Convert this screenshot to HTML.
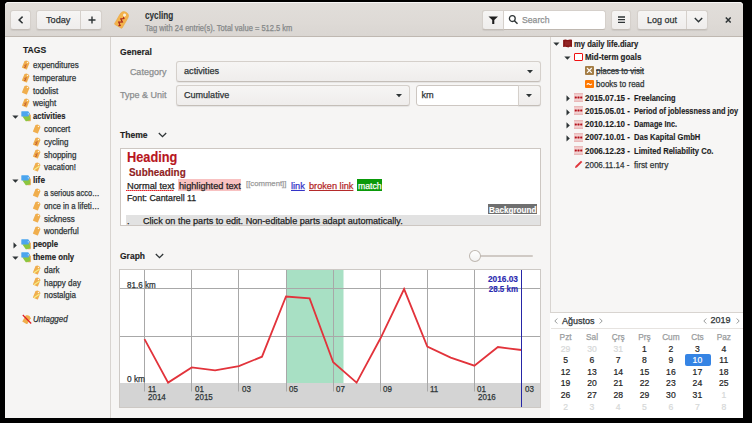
<!DOCTYPE html><html><head><meta charset="utf-8"><style>
html,body{margin:0;padding:0;width:752px;height:423px;overflow:hidden;background:#000;}
body{position:relative;font-family:"Liberation Sans",sans-serif;}
.r,.t{position:absolute;}
.t{white-space:nowrap;-webkit-text-stroke:0.25px currentColor;}
</style></head><body>
<div class="r" style="left:5px;top:2px;width:738px;height:416px;background:#f6f5f4;border-radius:4px 4px 0 0;"></div>
<div class="r" style="left:5px;top:2px;width:738px;height:34px;background:linear-gradient(#e1deda,#dedad6 60%,#dad6d2);border-radius:4px 4px 0 0;box-shadow:inset 0 1px rgba(255,255,255,0.7);"></div>
<div class="r" style="left:5px;top:36px;width:738px;height:1px;background:#bfb8b1;"></div>
<div class="r" style="left:10px;top:10px;width:21px;height:19.6px;background:linear-gradient(#f6f5f4,#efedec);border:1px solid #d5d0cb;border-bottom-color:#c4beb8;border-radius:3px;box-sizing:border-box;box-shadow:0 1px 1px rgba(0,0,0,0.07);"></div>
<svg class="r" style="left:17.1px;top:14.6px" width="8" height="10" viewBox="0 0 8 10"><path d="M5.6 1.6 L2.1 4.9 L5.6 8.2" fill="none" stroke="#2e3436" stroke-width="1.5"/></svg>
<div class="r" style="left:36px;top:10px;width:66px;height:19.6px;background:linear-gradient(#f6f5f4,#efedec);border:1px solid #d5d0cb;border-bottom-color:#c4beb8;border-radius:3px;box-sizing:border-box;box-shadow:0 1px 1px rgba(0,0,0,0.07);"></div>
<div class="r" style="left:80px;top:11px;width:1px;height:18px;background:#d5d0cb;"></div>
<div class="t" style="left:46px;top:14px;font-size:9.9px;line-height:11px;color:#2e3436;transform:scaleX(0.9260);transform-origin:0 0;">Today</div>
<svg class="r" style="left:87.5px;top:15.5px" width="8" height="8" viewBox="0 0 8 8"><path d="M4 0.5 V7.5 M0.5 4 H7.5" fill="none" stroke="#2e3436" stroke-width="1.4"/></svg>
<svg class="r" style="left:111px;top:8px" width="22" height="23" viewBox="0 0 22 23"><g transform="rotate(30 11 11.5)"><path d="M6.6 7.8 Q6.6 3.2 11 3.2 Q15.4 3.2 15.4 7.8 L15.4 18.6 Q15.4 19.4 14.6 19.4 L7.4 19.4 Q6.6 19.4 6.6 18.6 Z" fill="#f3b34c" stroke="#eaa53c" stroke-width="0.5"/><circle cx="11" cy="6.4" r="1.5" fill="#f9f1e0"/><path d="M11 8.6 L12.2 9.6 L9.6 11.6 L12.6 13.4 L9.4 15.4 L12.4 17.6 L11 18.6" fill="none" stroke="#a8261c" stroke-width="1.1"/></g></svg>
<div class="t" style="left:145.3px;top:10px;font-size:10.37px;line-height:11px;color:#2e3436;font-weight:700;-webkit-text-stroke:0.15px currentColor;transform:scaleX(0.7900);transform-origin:0 0;">cycling</div>
<div class="t" style="left:145.3px;top:23px;font-size:8.36px;line-height:10px;color:#858889;transform:scaleX(0.9023);transform-origin:0 0;">Tag with 24 entrie(s). Total value = 512.5 km</div>
<div class="r" style="left:482px;top:10px;width:123.5px;height:19.6px;border:1px solid #d5d0cb;border-bottom-color:#bfb8b1;border-radius:3px;box-sizing:border-box;background:#fff;"></div>
<div class="r" style="left:482px;top:10px;width:22px;height:19.6px;background:linear-gradient(#f6f5f4,#efedec);border:1px solid #d5d0cb;border-bottom-color:#c4beb8;border-radius:3px;box-sizing:border-box;box-shadow:0 1px 1px rgba(0,0,0,0.07);border-radius:3px 0 0 3px;"></div>
<svg class="r" style="left:487.5px;top:15.5px" width="11" height="8.5" viewBox="0 0 11 8.5"><path d="M0.5 0.5 H10 L6.3 4 V8 L4.2 8 V4 Z" fill="#1e1e1e"/></svg>
<svg class="r" style="left:508px;top:14px" width="11" height="11" viewBox="0 0 11 11"><circle cx="4.3" cy="4.6" r="2.9" fill="none" stroke="#2e3436" stroke-width="1.3"/><path d="M6.4 6.7 L9.5 9.8" stroke="#2e3436" stroke-width="1.4"/></svg>
<div class="t" style="left:522.3px;top:14px;font-size:9.9px;line-height:11px;color:#8b8e8f;transform:scaleX(0.8789);transform-origin:0 0;">Search</div>
<div class="r" style="left:611px;top:10px;width:20px;height:19.6px;background:linear-gradient(#f6f5f4,#efedec);border:1px solid #d5d0cb;border-bottom-color:#c4beb8;border-radius:3px;box-sizing:border-box;box-shadow:0 1px 1px rgba(0,0,0,0.07);"></div>
<svg class="r" style="left:617.5px;top:16px" width="7" height="7.5" viewBox="0 0 7 7.5"><path d="M0 1 H7 M0 3.7 H7 M0 6.4 H7" stroke="#2e3436" stroke-width="1.3"/></svg>
<div class="r" style="left:636.5px;top:10px;width:71.10000000000002px;height:19.6px;background:linear-gradient(#f6f5f4,#efedec);border:1px solid #d5d0cb;border-bottom-color:#c4beb8;border-radius:3px;box-sizing:border-box;box-shadow:0 1px 1px rgba(0,0,0,0.07);"></div>
<div class="r" style="left:686px;top:11px;width:1px;height:18px;background:#d5d0cb;"></div>
<div class="t" style="left:646.5px;top:14px;font-size:9.9px;line-height:11px;color:#2e3436;transform:scaleX(0.9075);transform-origin:0 0;">Log out</div>
<svg class="r" style="left:693.5px;top:16.5px" width="9" height="6" viewBox="0 0 9 6"><path d="M0.8 1 L4.5 4.7 L8.2 1" fill="none" stroke="#2e3436" stroke-width="1.4"/></svg>
<svg class="r" style="left:724.5px;top:16.8px" width="6.5" height="6" viewBox="0 0 6.5 6"><path d="M0.8 0.5 L5.7 5.5 M5.7 0.5 L0.8 5.5" stroke="#2e3436" stroke-width="1.5"/></svg>
<div class="r" style="left:110px;top:37px;width:1px;height:381px;background:#d8d4d0;"></div>
<div class="r" style="left:550px;top:37px;width:1px;height:381px;background:#d8d4d0;"></div>
<div class="t" style="left:22.9px;top:44px;font-size:9.72px;line-height:11px;color:#1e1e1e;font-weight:700;-webkit-text-stroke:0.15px currentColor;transform:scaleX(0.8829);transform-origin:0 0;">TAGS</div>
<svg class="r" style="left:21.4px;top:58.7px" width="10" height="11" viewBox="0 0 10 11"><g transform="rotate(22 5 5.5)"><path d="M2.3 2.8 Q5 0 7.7 2.8 L7.7 9.6 Q7.7 10 7.3 10 L2.7 10 Q2.3 10 2.3 9.6 Z" fill="#f0ae4d"/><path d="M4.2 9 L5.8 7.8 L4.2 6.6 L5.9 5.4" fill="none" stroke="#c5602f" stroke-width="0.9"/><circle cx="5.6" cy="3" r="0.75" fill="#fdf6e8"/></g></svg>
<div class="t" style="left:32.8px;top:60px;font-size:8.8px;line-height:10px;color:#2e3436;transform:scaleX(0.9094);transform-origin:0 0;">expenditures</div>
<svg class="r" style="left:21.4px;top:71.5px" width="10" height="11" viewBox="0 0 10 11"><g transform="rotate(22 5 5.5)"><path d="M2.3 2.8 Q5 0 7.7 2.8 L7.7 9.6 Q7.7 10 7.3 10 L2.7 10 Q2.3 10 2.3 9.6 Z" fill="#f0ae4d"/><path d="M4.2 9 L5.8 7.8 L4.2 6.6 L5.9 5.4" fill="none" stroke="#c5602f" stroke-width="0.9"/><circle cx="5.6" cy="3" r="0.75" fill="#fdf6e8"/></g></svg>
<div class="t" style="left:32.8px;top:73px;font-size:8.8px;line-height:10px;color:#2e3436;transform:scaleX(0.9094);transform-origin:0 0;">temperature</div>
<svg class="r" style="left:21.4px;top:84.3px" width="10" height="11" viewBox="0 0 10 11"><g transform="rotate(22 5 5.5)"><path d="M2.3 2.8 Q5 0 7.7 2.8 L7.7 9.6 Q7.7 10 7.3 10 L2.7 10 Q2.3 10 2.3 9.6 Z" fill="#f0ae4d"/><circle cx="5.6" cy="3" r="0.75" fill="#fdf6e8"/></g></svg>
<div class="t" style="left:32.8px;top:86px;font-size:8.8px;line-height:10px;color:#2e3436;transform:scaleX(0.9094);transform-origin:0 0;">todolist</div>
<svg class="r" style="left:21.4px;top:97.10000000000001px" width="10" height="11" viewBox="0 0 10 11"><g transform="rotate(22 5 5.5)"><path d="M2.3 2.8 Q5 0 7.7 2.8 L7.7 9.6 Q7.7 10 7.3 10 L2.7 10 Q2.3 10 2.3 9.6 Z" fill="#f0ae4d"/><path d="M4.2 9 L5.8 7.8 L4.2 6.6 L5.9 5.4" fill="none" stroke="#c5602f" stroke-width="0.9"/><circle cx="5.6" cy="3" r="0.75" fill="#fdf6e8"/></g></svg>
<div class="t" style="left:32.8px;top:98px;font-size:8.8px;line-height:10px;color:#2e3436;transform:scaleX(0.9094);transform-origin:0 0;">weight</div>
<svg class="r" style="left:21.0px;top:111.3px" width="11" height="11" viewBox="0 0 11 11"><path d="M7.2 1.8 L9.9 4 L9.9 9.6 Q9.9 10.3 9.2 10.3 L6.4 10.3 Z" fill="#eda85a"/><path d="M1.3 5.3 L8.6 4.6 L9.3 8.2 Q9.4 8.8 8.8 9.2 L5.6 10.2 Q5 10.4 4.6 9.9 Z" fill="#8cc63f"/><path d="M0.3 0.8 Q0.3 0.3 0.8 0.3 H7.2 L9 2.85 L7.2 5.4 H0.8 Q0.3 5.4 0.3 4.9 Z" fill="#4ba5ee"/><circle cx="7.3" cy="2.85" r="0.6" fill="#e8f4fd"/></svg>
<svg class="r" style="left:12.3px;top:115.0px" width="7" height="5" viewBox="0 0 7 5"><path d="M0.3 0.5 H6.5 L3.4 3.8 Z" fill="#2e3436"/></svg>
<div class="t" style="left:32.6px;top:111px;font-size:8.8px;line-height:10px;color:#1e1e1e;font-weight:700;-webkit-text-stroke:0.15px currentColor;transform:scaleX(0.8631);transform-origin:0 0;">activities</div>
<svg class="r" style="left:32.1px;top:122.7px" width="10" height="11" viewBox="0 0 10 11"><g transform="rotate(22 5 5.5)"><path d="M2.3 2.8 Q5 0 7.7 2.8 L7.7 9.6 Q7.7 10 7.3 10 L2.7 10 Q2.3 10 2.3 9.6 Z" fill="#f0ae4d"/><circle cx="5.6" cy="3" r="0.75" fill="#fdf6e8"/></g></svg>
<div class="t" style="left:43.5px;top:124px;font-size:8.8px;line-height:10px;color:#2e3436;transform:scaleX(0.9094);transform-origin:0 0;">concert</div>
<svg class="r" style="left:32.1px;top:135.5px" width="10" height="11" viewBox="0 0 10 11"><g transform="rotate(22 5 5.5)"><path d="M2.3 2.8 Q5 0 7.7 2.8 L7.7 9.6 Q7.7 10 7.3 10 L2.7 10 Q2.3 10 2.3 9.6 Z" fill="#f0ae4d"/><path d="M4.2 9 L5.8 7.8 L4.2 6.6 L5.9 5.4" fill="none" stroke="#c5602f" stroke-width="0.9"/><circle cx="5.6" cy="3" r="0.75" fill="#fdf6e8"/></g></svg>
<div class="t" style="left:43.5px;top:137px;font-size:8.8px;line-height:10px;color:#2e3436;transform:scaleX(0.9094);transform-origin:0 0;">cycling</div>
<svg class="r" style="left:32.1px;top:148.3px" width="10" height="11" viewBox="0 0 10 11"><g transform="rotate(22 5 5.5)"><path d="M2.3 2.8 Q5 0 7.7 2.8 L7.7 9.6 Q7.7 10 7.3 10 L2.7 10 Q2.3 10 2.3 9.6 Z" fill="#f0ae4d"/><path d="M4.2 9 L5.8 7.8 L4.2 6.6 L5.9 5.4" fill="none" stroke="#c5602f" stroke-width="0.9"/><circle cx="5.6" cy="3" r="0.75" fill="#fdf6e8"/></g></svg>
<div class="t" style="left:43.5px;top:150px;font-size:8.8px;line-height:10px;color:#2e3436;transform:scaleX(0.9094);transform-origin:0 0;">shopping</div>
<svg class="r" style="left:32.1px;top:161.1px" width="10" height="11" viewBox="0 0 10 11"><g transform="rotate(22 5 5.5)"><path d="M2.3 2.8 Q5 0 7.7 2.8 L7.7 9.6 Q7.7 10 7.3 10 L2.7 10 Q2.3 10 2.3 9.6 Z" fill="#f0ae4d"/><path d="M3.4 9.6 L7.2 4" stroke="#f4f08a" stroke-width="1.1"/><circle cx="5.6" cy="3" r="0.75" fill="#fdf6e8"/></g></svg>
<div class="t" style="left:43.5px;top:162px;font-size:8.8px;line-height:10px;color:#2e3436;transform:scaleX(0.9094);transform-origin:0 0;">vacation!</div>
<svg class="r" style="left:21.0px;top:175.29999999999998px" width="11" height="11" viewBox="0 0 11 11"><path d="M7.2 1.8 L9.9 4 L9.9 9.6 Q9.9 10.3 9.2 10.3 L6.4 10.3 Z" fill="#eda85a"/><path d="M1.3 5.3 L8.6 4.6 L9.3 8.2 Q9.4 8.8 8.8 9.2 L5.6 10.2 Q5 10.4 4.6 9.9 Z" fill="#8cc63f"/><path d="M0.3 0.8 Q0.3 0.3 0.8 0.3 H7.2 L9 2.85 L7.2 5.4 H0.8 Q0.3 5.4 0.3 4.9 Z" fill="#4ba5ee"/><circle cx="7.3" cy="2.85" r="0.6" fill="#e8f4fd"/></svg>
<svg class="r" style="left:12.3px;top:179.0px" width="7" height="5" viewBox="0 0 7 5"><path d="M0.3 0.5 H6.5 L3.4 3.8 Z" fill="#2e3436"/></svg>
<div class="t" style="left:32.6px;top:175px;font-size:8.8px;line-height:10px;color:#1e1e1e;font-weight:700;-webkit-text-stroke:0.15px currentColor;transform:scaleX(0.9441);transform-origin:0 0;">life</div>
<svg class="r" style="left:32.1px;top:186.7px" width="10" height="11" viewBox="0 0 10 11"><g transform="rotate(22 5 5.5)"><path d="M2.3 2.8 Q5 0 7.7 2.8 L7.7 9.6 Q7.7 10 7.3 10 L2.7 10 Q2.3 10 2.3 9.6 Z" fill="#f0ae4d"/><circle cx="5.6" cy="3" r="0.75" fill="#fdf6e8"/></g></svg>
<div class="t" style="left:43.5px;top:188px;font-size:8.8px;line-height:10px;color:#2e3436;transform:scaleX(0.8471);transform-origin:0 0;">a serious acco…</div>
<svg class="r" style="left:32.1px;top:199.5px" width="10" height="11" viewBox="0 0 10 11"><g transform="rotate(22 5 5.5)"><path d="M2.3 2.8 Q5 0 7.7 2.8 L7.7 9.6 Q7.7 10 7.3 10 L2.7 10 Q2.3 10 2.3 9.6 Z" fill="#f0ae4d"/><circle cx="5.6" cy="3" r="0.75" fill="#fdf6e8"/></g></svg>
<div class="t" style="left:43.5px;top:201px;font-size:8.8px;line-height:10px;color:#2e3436;transform:scaleX(0.8868);transform-origin:0 0;">once in a lifeti…</div>
<svg class="r" style="left:32.1px;top:212.3px" width="10" height="11" viewBox="0 0 10 11"><g transform="rotate(22 5 5.5)"><path d="M2.3 2.8 Q5 0 7.7 2.8 L7.7 9.6 Q7.7 10 7.3 10 L2.7 10 Q2.3 10 2.3 9.6 Z" fill="#f0ae4d"/><circle cx="5.6" cy="3" r="0.75" fill="#fdf6e8"/></g></svg>
<div class="t" style="left:43.5px;top:214px;font-size:8.8px;line-height:10px;color:#2e3436;transform:scaleX(0.9094);transform-origin:0 0;">sickness</div>
<svg class="r" style="left:32.1px;top:225.1px" width="10" height="11" viewBox="0 0 10 11"><g transform="rotate(22 5 5.5)"><path d="M2.3 2.8 Q5 0 7.7 2.8 L7.7 9.6 Q7.7 10 7.3 10 L2.7 10 Q2.3 10 2.3 9.6 Z" fill="#f0ae4d"/><circle cx="5.6" cy="3" r="0.75" fill="#fdf6e8"/></g></svg>
<div class="t" style="left:43.5px;top:226px;font-size:8.8px;line-height:10px;color:#2e3436;transform:scaleX(0.9094);transform-origin:0 0;">wonderful</div>
<svg class="r" style="left:21.0px;top:239.3px" width="11" height="11" viewBox="0 0 11 11"><path d="M7.2 1.8 L9.9 4 L9.9 9.6 Q9.9 10.3 9.2 10.3 L6.4 10.3 Z" fill="#eda85a"/><path d="M1.3 5.3 L8.6 4.6 L9.3 8.2 Q9.4 8.8 8.8 9.2 L5.6 10.2 Q5 10.4 4.6 9.9 Z" fill="#8cc63f"/><path d="M0.3 0.8 Q0.3 0.3 0.8 0.3 H7.2 L9 2.85 L7.2 5.4 H0.8 Q0.3 5.4 0.3 4.9 Z" fill="#4ba5ee"/><circle cx="7.3" cy="2.85" r="0.6" fill="#e8f4fd"/></svg>
<svg class="r" style="left:13.3px;top:241.50000000000003px" width="5" height="7" viewBox="0 0 5 7"><path d="M0.5 0.3 V6.5 L3.8 3.4 Z" fill="#2e3436"/></svg>
<div class="t" style="left:32.6px;top:239px;font-size:8.8px;line-height:10px;color:#1e1e1e;font-weight:700;-webkit-text-stroke:0.15px currentColor;transform:scaleX(0.8854);transform-origin:0 0;">people</div>
<svg class="r" style="left:21.0px;top:252.1px" width="11" height="11" viewBox="0 0 11 11"><path d="M7.2 1.8 L9.9 4 L9.9 9.6 Q9.9 10.3 9.2 10.3 L6.4 10.3 Z" fill="#eda85a"/><path d="M1.3 5.3 L8.6 4.6 L9.3 8.2 Q9.4 8.8 8.8 9.2 L5.6 10.2 Q5 10.4 4.6 9.9 Z" fill="#8cc63f"/><path d="M0.3 0.8 Q0.3 0.3 0.8 0.3 H7.2 L9 2.85 L7.2 5.4 H0.8 Q0.3 5.4 0.3 4.9 Z" fill="#4ba5ee"/><circle cx="7.3" cy="2.85" r="0.6" fill="#e8f4fd"/></svg>
<svg class="r" style="left:12.3px;top:255.8px" width="7" height="5" viewBox="0 0 7 5"><path d="M0.3 0.5 H6.5 L3.4 3.8 Z" fill="#2e3436"/></svg>
<div class="t" style="left:32.6px;top:252px;font-size:8.8px;line-height:10px;color:#1e1e1e;font-weight:700;-webkit-text-stroke:0.15px currentColor;transform:scaleX(0.8872);transform-origin:0 0;">theme only</div>
<svg class="r" style="left:32.1px;top:263.5px" width="10" height="11" viewBox="0 0 10 11"><g transform="rotate(22 5 5.5)"><path d="M2.3 2.8 Q5 0 7.7 2.8 L7.7 9.6 Q7.7 10 7.3 10 L2.7 10 Q2.3 10 2.3 9.6 Z" fill="#f0ae4d"/><path d="M3.4 9.6 L7.2 4" stroke="#f4f08a" stroke-width="1.1"/><circle cx="5.6" cy="3" r="0.75" fill="#fdf6e8"/></g></svg>
<div class="t" style="left:43.5px;top:265px;font-size:8.8px;line-height:10px;color:#2e3436;transform:scaleX(0.9094);transform-origin:0 0;">dark</div>
<svg class="r" style="left:32.1px;top:276.3px" width="10" height="11" viewBox="0 0 10 11"><g transform="rotate(22 5 5.5)"><path d="M2.3 2.8 Q5 0 7.7 2.8 L7.7 9.6 Q7.7 10 7.3 10 L2.7 10 Q2.3 10 2.3 9.6 Z" fill="#f0ae4d"/><path d="M3.4 9.6 L7.2 4" stroke="#f4f08a" stroke-width="1.1"/><circle cx="5.6" cy="3" r="0.75" fill="#fdf6e8"/></g></svg>
<div class="t" style="left:43.5px;top:278px;font-size:8.8px;line-height:10px;color:#2e3436;transform:scaleX(0.9094);transform-origin:0 0;">happy day</div>
<svg class="r" style="left:32.1px;top:289.09999999999997px" width="10" height="11" viewBox="0 0 10 11"><g transform="rotate(22 5 5.5)"><path d="M2.3 2.8 Q5 0 7.7 2.8 L7.7 9.6 Q7.7 10 7.3 10 L2.7 10 Q2.3 10 2.3 9.6 Z" fill="#f0ae4d"/><path d="M3.4 9.6 L7.2 4" stroke="#f4f08a" stroke-width="1.1"/><circle cx="5.6" cy="3" r="0.75" fill="#fdf6e8"/></g></svg>
<div class="t" style="left:43.5px;top:290px;font-size:8.8px;line-height:10px;color:#2e3436;transform:scaleX(0.9094);transform-origin:0 0;">nostalgia</div>
<svg class="r" style="left:21.5px;top:313.8px" width="10" height="10" viewBox="0 0 10 10"><g transform="rotate(30 5 5)"><path d="M2.2 2.4 Q5 -0.4 7.8 2.4 L7.8 9.6 L2.2 9.6 Z" fill="#f0ae4d"/></g><path d="M0.8 1 L9.2 9.5" stroke="#e01b24" stroke-width="1.2"/></svg>
<div class="t" style="left:33px;top:314px;font-size:8.8px;line-height:10px;color:#2e3436;font-style:italic;transform:scaleX(0.9094);transform-origin:0 0;">Untagged</div>
<div class="t" style="left:119.8px;top:47px;font-size:9.13px;line-height:10px;color:#1e1e1e;font-weight:700;-webkit-text-stroke:0.15px currentColor;transform:scaleX(0.9387);transform-origin:0 0;">General</div>
<div class="t" style="left:-33.599999999999994px;width:200px;text-align:right;top:67px;font-size:9px;line-height:10px;color:#8b8e8f;">Category</div>
<div class="t" style="left:-33.599999999999994px;width:200px;text-align:right;top:90px;font-size:9px;line-height:10px;color:#8b8e8f;">Type &amp; Unit</div>
<div class="r" style="left:176px;top:61px;width:365px;height:21px;background:linear-gradient(#f6f5f4,#efedec);border:1px solid #d5d0cb;border-bottom-color:#c4beb8;border-radius:3px;box-sizing:border-box;box-shadow:0 1px 1px rgba(0,0,0,0.07);"></div>
<div class="t" style="left:183.6px;top:66px;font-size:9.2px;line-height:10px;color:#2e3436;transform:scaleX(0.9963);transform-origin:0 0;">activities</div>
<svg class="r" style="left:526.5px;top:69.8px" width="6" height="4" viewBox="0 0 6 4"><path d="M0 0 H6 L3 3.2 Z" fill="#2e3436"/></svg>
<div class="r" style="left:176px;top:85px;width:234px;height:21px;background:linear-gradient(#f6f5f4,#efedec);border:1px solid #d5d0cb;border-bottom-color:#c4beb8;border-radius:3px;box-sizing:border-box;box-shadow:0 1px 1px rgba(0,0,0,0.07);"></div>
<div class="t" style="left:183.6px;top:90px;font-size:9.2px;line-height:10px;color:#2e3436;transform:scaleX(0.9836);transform-origin:0 0;">Cumulative</div>
<svg class="r" style="left:395.8px;top:93.5px" width="6" height="4" viewBox="0 0 6 4"><path d="M0 0 H6 L3 3.2 Z" fill="#2e3436"/></svg>
<div class="r" style="left:416px;top:85px;width:125px;height:21px;background:#fff;border:1px solid #cdc7c2;border-radius:3px;box-sizing:border-box;"></div>
<div class="r" style="left:518px;top:85px;width:23px;height:21px;background:linear-gradient(#f6f5f4,#efedec);border:1px solid #d5d0cb;border-bottom-color:#c4beb8;border-radius:3px;box-sizing:border-box;box-shadow:0 1px 1px rgba(0,0,0,0.07);border-radius:0 3px 3px 0;"></div>
<div class="t" style="left:421.5px;top:90px;font-size:9.2px;line-height:10px;color:#2e3436;">km</div>
<svg class="r" style="left:526.3px;top:93.5px" width="6" height="4" viewBox="0 0 6 4"><path d="M0 0 H6 L3 3.2 Z" fill="#2e3436"/></svg>
<div class="t" style="left:120px;top:130px;font-size:8.8px;line-height:10px;color:#1e1e1e;font-weight:700;-webkit-text-stroke:0.15px currentColor;transform:scaleX(0.9734);transform-origin:0 0;">Theme</div>
<svg class="r" style="left:157.5px;top:132px" width="9" height="6" viewBox="0 0 9 6"><path d="M0.8 1 L4.5 4.7 L8.2 1" fill="none" stroke="#2e3436" stroke-width="1.3"/></svg>
<div class="r" style="left:119.5px;top:148.2px;width:421.1px;height:78.10000000000002px;background:#fff;border:1px solid #cdc7c2;box-sizing:border-box;"></div>
<div class="t" style="left:127.1px;top:149px;font-size:14.04px;line-height:16px;color:#b8161e;font-weight:700;-webkit-text-stroke:0.15px currentColor;transform:scaleX(0.9087);transform-origin:0 0;">Heading</div>
<div class="t" style="left:128.8px;top:167px;font-size:10px;line-height:11px;color:#902222;font-weight:700;-webkit-text-stroke:0.15px currentColor;transform:scaleX(0.9909);transform-origin:0 0;">Subheading</div>
<div class="t" style="left:126.6px;top:181px;font-size:9.3px;line-height:10px;color:#1e1e1e;transform:scaleX(0.9973);transform-origin:0 0;">Normal text</div>
<div class="r" style="left:126.2px;top:189.9px;width:48.3px;height:1.0px;background:repeating-linear-gradient(90deg,#e5262e 0,#e5262e 1.5px,#f07a7e 1.5px,#f07a7e 2px);"></div>
<div class="r" style="left:178px;top:178.8px;width:63.30000000000001px;height:12.0px;background:#f8c1c1;"></div>
<div class="t" style="left:179.3px;top:181px;font-size:9.3px;line-height:10px;color:#1e1e1e;transform:scaleX(0.9866);transform-origin:0 0;">highlighted text</div>
<div class="t" style="left:245.8px;top:179px;font-size:7.6px;line-height:9px;color:#9a9a9a;transform:scaleX(1.0185);transform-origin:0 0;">[[comment]]</div>
<div class="t" style="left:290.9px;top:181px;font-size:9.2px;line-height:10px;color:#3434c8;transform:scaleX(1.0010);transform-origin:0 0;text-decoration:underline;">link</div>
<div class="t" style="left:308.7px;top:181px;font-size:9.2px;line-height:10px;color:#b52a2a;transform:scaleX(0.9993);transform-origin:0 0;text-decoration:underline;">broken link</div>
<div class="r" style="left:357.1px;top:178.8px;width:25.0px;height:12.699999999999989px;background:#0a9a0a;"></div>
<div class="t" style="left:358.2px;top:181px;font-size:9.2px;line-height:10px;color:#ffffff;transform:scaleX(0.9393);transform-origin:0 0;">match</div>
<div class="t" style="left:126.6px;top:193px;font-size:9px;line-height:10px;color:#1e1e1e;transform:scaleX(0.9764);transform-origin:0 0;">Font: Cantarell 11</div>
<div class="r" style="left:488.3px;top:203.7px;width:48.99999999999994px;height:10.700000000000017px;background:#6f6f6f;"></div>
<div class="t" style="left:489px;top:205px;font-size:8.3px;line-height:10px;color:#ffffff;font-weight:700;-webkit-text-stroke:0.15px currentColor;transform:scaleX(0.9813);transform-origin:0 0;">Background</div>
<div class="r" style="left:126px;top:215.4px;width:413.6px;height:10.099999999999994px;background:#e2e2e2;"></div>
<div class="t" style="left:127px;top:216px;font-size:9.1px;line-height:10px;color:#1e1e1e;">.</div>
<div class="t" style="left:142.5px;top:216px;font-size:9.2px;line-height:10px;color:#1e1e1e;transform:scaleX(0.9900);transform-origin:0 0;">Click on the parts to edit. Non-editable parts adapt automatically.</div>
<div class="t" style="left:119.9px;top:251px;font-size:9px;line-height:10px;color:#1e1e1e;font-weight:700;-webkit-text-stroke:0.15px currentColor;transform:scaleX(0.9433);transform-origin:0 0;">Graph</div>
<svg class="r" style="left:155.3px;top:253.2px" width="9" height="6" viewBox="0 0 9 6"><path d="M0.8 1 L4.5 4.7 L8.2 1" fill="none" stroke="#2e3436" stroke-width="1.3"/></svg>
<div class="r" style="left:474px;top:255px;width:59px;height:1.8000000000000114px;background:#d0cac5;border-radius:1px;"></div>
<div class="r" style="left:468.6px;top:249.6px;width:12.399999999999977px;height:12.599999999999994px;background:linear-gradient(#fff,#f3f2f1);border:1px solid #bfb8b1;border-radius:50%;box-sizing:border-box;"></div>
<svg class="r" style="left:119px;top:269px" width="422" height="139"><rect x="0" y="0" width="422" height="139" fill="#fff"/><rect x="167" y="1" width="57.5" height="113" fill="#a8e0c4"/><rect x="1" y="114" width="420" height="24" fill="#d4d4d4"/><path d="M1 19.5 H421" stroke="#a8a8a8" stroke-width="1"/><path d="M1 67.5 H421" stroke="#a8a8a8" stroke-width="1"/><path d="M25.5 1 V122.5" stroke="#a8a8a8" stroke-width="1"/><path d="M72.5 1 V122.5" stroke="#a8a8a8" stroke-width="1"/><path d="M119.5 1 V122.5" stroke="#a8a8a8" stroke-width="1"/><path d="M167.5 1 V122.5" stroke="#a8a8a8" stroke-width="1"/><path d="M214.5 1 V122.5" stroke="#a8a8a8" stroke-width="1"/><path d="M261.5 1 V122.5" stroke="#a8a8a8" stroke-width="1"/><path d="M308.5 1 V122.5" stroke="#a8a8a8" stroke-width="1"/><path d="M355.5 1 V122.5" stroke="#a8a8a8" stroke-width="1"/><path d="M25.50 70.10 L49.10 113.60 L72.70 98.40 L96.10 101.30 L119.90 97.10 L143.00 87.70 L167.00 27.50 L190.60 29.40 L214.20 93.20 L237.60 113.70 L261.50 69.30 L285.10 20.10 L308.30 77.50 L331.70 88.60 L355.40 96.70 L378.90 78.00 L402.40 81.00" fill="none" stroke="#e2333b" stroke-width="1.8" stroke-linejoin="miter"/><path d="M402.5 1 V138" stroke="#2626a6" stroke-width="1"/><rect x="0.5" y="0.5" width="421" height="138" fill="none" stroke="#cdc9c5" stroke-width="1"/></svg>
<div class="t" style="left:126.6px;top:280px;font-size:8.8px;line-height:10px;color:#2e3436;transform:scaleX(0.9140);transform-origin:0 0;">81.6 km</div>
<div class="t" style="left:126.5px;top:374px;font-size:8.8px;line-height:10px;color:#2e3436;transform:scaleX(0.9442);transform-origin:0 0;">0 km</div>
<div class="t" style="left:147.7px;top:384px;font-size:8.8px;line-height:10px;color:#2e3436;transform:scaleX(0.9094);transform-origin:0 0;">11</div>
<div class="t" style="left:194.79999999999998px;top:384px;font-size:8.8px;line-height:10px;color:#2e3436;transform:scaleX(0.9094);transform-origin:0 0;">01</div>
<div class="t" style="left:241.89999999999998px;top:384px;font-size:8.8px;line-height:10px;color:#2e3436;transform:scaleX(0.9094);transform-origin:0 0;">03</div>
<div class="t" style="left:289.0px;top:384px;font-size:8.8px;line-height:10px;color:#2e3436;transform:scaleX(0.9094);transform-origin:0 0;">05</div>
<div class="t" style="left:336.09999999999997px;top:384px;font-size:8.8px;line-height:10px;color:#2e3436;transform:scaleX(0.9094);transform-origin:0 0;">07</div>
<div class="t" style="left:383.2px;top:384px;font-size:8.8px;line-height:10px;color:#2e3436;transform:scaleX(0.9094);transform-origin:0 0;">09</div>
<div class="t" style="left:430.3px;top:384px;font-size:8.8px;line-height:10px;color:#2e3436;transform:scaleX(0.9094);transform-origin:0 0;">11</div>
<div class="t" style="left:477.4px;top:384px;font-size:8.8px;line-height:10px;color:#2e3436;transform:scaleX(0.9094);transform-origin:0 0;">01</div>
<div class="t" style="left:524.5px;top:384px;font-size:8.8px;line-height:10px;color:#2e3436;transform:scaleX(0.9094);transform-origin:0 0;">03</div>
<div class="t" style="left:147.7px;top:392px;font-size:8.8px;line-height:10px;color:#2e3436;transform:scaleX(0.9094);transform-origin:0 0;">2014</div>
<div class="t" style="left:194.8px;top:392px;font-size:8.8px;line-height:10px;color:#2e3436;transform:scaleX(0.9094);transform-origin:0 0;">2015</div>
<div class="t" style="left:477.5px;top:392px;font-size:8.8px;line-height:10px;color:#2e3436;transform:scaleX(0.9094);transform-origin:0 0;">2016</div>
<div class="t" style="left:318.20000000000005px;width:200px;text-align:right;top:274px;font-size:8.3px;line-height:10px;color:#2a2ab0;font-weight:700;-webkit-text-stroke:0.15px currentColor;transform:scaleX(1.0036);transform-origin:100% 0;">2016.03</div>
<div class="t" style="left:318.20000000000005px;width:200px;text-align:right;top:284px;font-size:8.3px;line-height:10px;color:#2a2ab0;font-weight:700;-webkit-text-stroke:0.15px currentColor;transform:scaleX(0.9591);transform-origin:100% 0;">28.5 km</div>
<div class="r" style="left:551px;top:37px;width:192px;height:275px;background:#f7f6f5;"></div>
<svg class="r" style="left:552.9px;top:41.8px" width="7" height="5" viewBox="0 0 7 5"><path d="M0.3 0.5 H6.5 L3.4 3.8 Z" fill="#2e3436"/></svg>
<svg class="r" style="left:562.8px;top:38.9px" width="9.4" height="9.2" viewBox="0 0 9.4 9.2"><path d="M0.1 1 Q2.4 -0.1 4.7 1.1 Q7 -0.1 9.3 1 V8.1 Q7.6 7.6 5.4 8.1 L5.8 9 L4.8 8.3 Q2.4 7.5 0.1 8.1 Z" fill="#861515"/><rect x="2" y="2.3" width="5.4" height="4.2" fill="#922525"/></svg>
<div class="t" style="left:573.9px;top:39px;font-size:8.8px;line-height:10px;color:#1e1e1e;font-weight:700;-webkit-text-stroke:0.15px currentColor;transform:scaleX(0.8696);transform-origin:0 0;">my daily life.diary</div>
<svg class="r" style="left:563.9px;top:55.5px" width="7" height="5" viewBox="0 0 7 5"><path d="M0.3 0.5 H6.5 L3.4 3.8 Z" fill="#2e3436"/></svg>
<div class="r" style="left:574.2px;top:52.7px;width:8.899999999999977px;height:8.5px;border:1.5px solid #f01010;border-radius:1px;box-sizing:border-box;background:#fff;"></div>
<div class="t" style="left:584.9px;top:52px;font-size:8.8px;line-height:10px;color:#1e1e1e;font-weight:700;-webkit-text-stroke:0.15px currentColor;transform:scaleX(0.8999);transform-origin:0 0;">Mid-term goals</div>
<div class="r" style="left:585.2px;top:66.1px;width:8.699999999999932px;height:8.900000000000006px;background:#a47d45;border-radius:1px;"></div>
<svg class="r" style="left:585.2px;top:66.1px" width="8.7" height="8.9" viewBox="0 0 8.7 8.9"><path d="M2 2 L6.7 6.9 M6.7 2 L2 6.9" stroke="#fff" stroke-width="1.1"/></svg>
<div class="t" style="left:596.2px;top:66px;font-size:8.8px;line-height:10px;color:#2e3436;transform:scaleX(0.9090);transform-origin:0 0;">places to visit</div>
<div class="r" style="left:596.2px;top:70.3px;width:48.09999999999991px;height:0.7000000000000028px;background:rgba(46,52,54,0.75);"></div>
<div class="r" style="left:585.2px;top:79.7px;width:8.699999999999932px;height:8.5px;background:#ff7800;border-radius:1px;"></div>
<svg class="r" style="left:585.2px;top:79.7px" width="8.7" height="8.5" viewBox="0 0 8.7 8.5"><path d="M1.8 4.6 Q3 2.8 4.3 4.2 Q5.6 5.6 6.9 3.8" fill="none" stroke="#fff" stroke-width="1.1"/></svg>
<div class="t" style="left:596.2px;top:79px;font-size:8.8px;line-height:10px;color:#2e3436;transform:scaleX(0.9094);transform-origin:0 0;">books to read</div>
<svg class="r" style="left:566px;top:95.2px" width="5" height="7" viewBox="0 0 5 7"><path d="M0.5 0.3 V6.5 L3.8 3.4 Z" fill="#2e3436"/></svg>
<svg class="r" style="left:574.1px;top:93.0px" width="9" height="9" viewBox="0 0 9 9"><rect x="0" y="0" width="9" height="9" fill="#eab9b9"/><path d="M0 2.1 H9 M0 6.9 H9" stroke="#fbeaea" stroke-width="0.8"/><circle cx="1.8" cy="4.5" r="1.05" fill="#b3101a"/><circle cx="4.5" cy="4.5" r="1.05" fill="#b3101a"/><circle cx="7.2" cy="4.5" r="1.05" fill="#b3101a"/></svg>
<div class="t" style="left:584.8px;top:93px;font-size:8.64px;line-height:10px;color:#1e1e1e;font-weight:700;-webkit-text-stroke:0.15px currentColor;transform:scaleX(0.9275);transform-origin:0 0;">2015.07.15 -</div>
<div class="t" style="left:634.2px;top:93px;font-size:8.8px;line-height:10px;color:#1e1e1e;font-weight:700;-webkit-text-stroke:0.15px currentColor;transform:scaleX(0.8425);transform-origin:0 0;">Freelancing</div>
<svg class="r" style="left:566px;top:108.5px" width="5" height="7" viewBox="0 0 5 7"><path d="M0.5 0.3 V6.5 L3.8 3.4 Z" fill="#2e3436"/></svg>
<svg class="r" style="left:574.1px;top:106.3px" width="9" height="9" viewBox="0 0 9 9"><rect x="0" y="0" width="9" height="9" fill="#eab9b9"/><path d="M0 2.1 H9 M0 6.9 H9" stroke="#fbeaea" stroke-width="0.8"/><circle cx="1.8" cy="4.5" r="1.05" fill="#b3101a"/><circle cx="4.5" cy="4.5" r="1.05" fill="#b3101a"/><circle cx="7.2" cy="4.5" r="1.05" fill="#b3101a"/></svg>
<div class="t" style="left:584.8px;top:106px;font-size:8.64px;line-height:10px;color:#1e1e1e;font-weight:700;-webkit-text-stroke:0.15px currentColor;transform:scaleX(0.9275);transform-origin:0 0;">2015.05.01 -</div>
<div class="t" style="left:634.2px;top:106px;font-size:8.8px;line-height:10px;color:#1e1e1e;font-weight:700;-webkit-text-stroke:0.15px currentColor;transform:scaleX(0.8392);transform-origin:0 0;">Period of joblessness and joy</div>
<svg class="r" style="left:566px;top:121.7px" width="5" height="7" viewBox="0 0 5 7"><path d="M0.5 0.3 V6.5 L3.8 3.4 Z" fill="#2e3436"/></svg>
<svg class="r" style="left:574.1px;top:119.5px" width="9" height="9" viewBox="0 0 9 9"><rect x="0" y="0" width="9" height="9" fill="#eab9b9"/><path d="M0 2.1 H9 M0 6.9 H9" stroke="#fbeaea" stroke-width="0.8"/><circle cx="1.8" cy="4.5" r="1.05" fill="#b3101a"/><circle cx="4.5" cy="4.5" r="1.05" fill="#b3101a"/><circle cx="7.2" cy="4.5" r="1.05" fill="#b3101a"/></svg>
<div class="t" style="left:584.8px;top:119px;font-size:8.64px;line-height:10px;color:#1e1e1e;font-weight:700;-webkit-text-stroke:0.15px currentColor;transform:scaleX(0.9275);transform-origin:0 0;">2010.12.10 -</div>
<div class="t" style="left:634.2px;top:119px;font-size:8.8px;line-height:10px;color:#1e1e1e;font-weight:700;-webkit-text-stroke:0.15px currentColor;transform:scaleX(0.8297);transform-origin:0 0;">Damage Inc.</div>
<svg class="r" style="left:566px;top:134.9px" width="5" height="7" viewBox="0 0 5 7"><path d="M0.5 0.3 V6.5 L3.8 3.4 Z" fill="#2e3436"/></svg>
<svg class="r" style="left:574.1px;top:132.7px" width="9" height="9" viewBox="0 0 9 9"><rect x="0" y="0" width="9" height="9" fill="#eab9b9"/><path d="M0 2.1 H9 M0 6.9 H9" stroke="#fbeaea" stroke-width="0.8"/><circle cx="1.8" cy="4.5" r="1.05" fill="#b3101a"/><circle cx="4.5" cy="4.5" r="1.05" fill="#b3101a"/><circle cx="7.2" cy="4.5" r="1.05" fill="#b3101a"/></svg>
<div class="t" style="left:584.8px;top:132px;font-size:8.64px;line-height:10px;color:#1e1e1e;font-weight:700;-webkit-text-stroke:0.15px currentColor;transform:scaleX(0.9275);transform-origin:0 0;">2007.10.01 -</div>
<div class="t" style="left:634.2px;top:132px;font-size:8.8px;line-height:10px;color:#1e1e1e;font-weight:700;-webkit-text-stroke:0.15px currentColor;transform:scaleX(0.8639);transform-origin:0 0;">Das Kapital GmbH</div>
<svg class="r" style="left:574.1px;top:146.2px" width="9" height="9" viewBox="0 0 9 9"><rect x="0" y="0" width="9" height="9" fill="#eab9b9"/><path d="M0 2.1 H9 M0 6.9 H9" stroke="#fbeaea" stroke-width="0.8"/><circle cx="1.8" cy="4.5" r="1.05" fill="#b3101a"/><circle cx="4.5" cy="4.5" r="1.05" fill="#b3101a"/><circle cx="7.2" cy="4.5" r="1.05" fill="#b3101a"/></svg>
<div class="t" style="left:584.8px;top:146px;font-size:8.64px;line-height:10px;color:#1e1e1e;font-weight:700;-webkit-text-stroke:0.15px currentColor;transform:scaleX(0.9275);transform-origin:0 0;">2006.12.23 -</div>
<div class="t" style="left:634.2px;top:146px;font-size:8.8px;line-height:10px;color:#1e1e1e;font-weight:700;-webkit-text-stroke:0.15px currentColor;transform:scaleX(0.8641);transform-origin:0 0;">Limited Reliability Co.</div>
<svg class="r" style="left:574.2px;top:159.8px" width="9" height="9" viewBox="0 0 9 9"><path d="M1 8 L1.5 6 L7 0.7 L8.3 2 L2.9 7.4 Z" fill="#e0343a"/></svg>
<div class="t" style="left:584.8px;top:160px;font-size:8.8px;line-height:10px;color:#2e3436;transform:scaleX(0.9094);transform-origin:0 0;">2006.11.14 -</div>
<div class="t" style="left:634.2px;top:160px;font-size:8.8px;line-height:10px;color:#2e3436;transform:scaleX(0.9483);transform-origin:0 0;">first entry</div>
<div class="r" style="left:550px;top:311.8px;width:193px;height:106.19999999999999px;background:#fff;border-top:1px solid #d8d4d0;box-sizing:border-box;"></div>
<svg class="r" style="left:553.5px;top:318px" width="4" height="6" viewBox="0 0 4 6"><path d="M3.3 0.5 L0.8 3 L3.3 5.5" fill="none" stroke="#8b8e8f" stroke-width="0.9"/></svg>
<div class="t" style="left:562.2px;top:315px;font-size:9.45px;line-height:11px;color:#2e3436;transform:scaleX(0.9560);transform-origin:0 0;">Ağustos</div>
<svg class="r" style="left:599px;top:318px" width="4" height="6" viewBox="0 0 4 6"><path d="M0.7 0.5 L3.2 3 L0.7 5.5" fill="none" stroke="#8b8e8f" stroke-width="0.9"/></svg>
<svg class="r" style="left:703px;top:318px" width="4" height="6" viewBox="0 0 4 6"><path d="M3.3 0.5 L0.8 3 L3.3 5.5" fill="none" stroke="#8b8e8f" stroke-width="0.9"/></svg>
<div class="t" style="left:710.4px;top:315px;font-size:9.0px;line-height:10px;color:#2e3436;">2019</div>
<svg class="r" style="left:736.2px;top:318px" width="4" height="6" viewBox="0 0 4 6"><path d="M0.7 0.5 L3.2 3 L0.7 5.5" fill="none" stroke="#8b8e8f" stroke-width="0.9"/></svg>
<div class="r" style="left:551px;top:328.2px;width:192px;height:0.8000000000000114px;background:#e6e3e0;"></div>
<div class="t" style="left:465.6px;width:200px;text-align:center;top:332px;font-size:8.3px;line-height:10px;color:#9a9d9e;">Pzt</div>
<div class="t" style="left:492px;width:200px;text-align:center;top:332px;font-size:8.3px;line-height:10px;color:#9a9d9e;">Sal</div>
<div class="t" style="left:518.2px;width:200px;text-align:center;top:332px;font-size:8.3px;line-height:10px;color:#9a9d9e;">Çrş</div>
<div class="t" style="left:544.5px;width:200px;text-align:center;top:332px;font-size:8.3px;line-height:10px;color:#9a9d9e;">Prş</div>
<div class="t" style="left:570.9px;width:200px;text-align:center;top:332px;font-size:8.3px;line-height:10px;color:#9a9d9e;">Cum</div>
<div class="t" style="left:597.4px;width:200px;text-align:center;top:332px;font-size:8.3px;line-height:10px;color:#9a9d9e;">Cts</div>
<div class="t" style="left:623.8px;width:200px;text-align:center;top:332px;font-size:8.3px;line-height:10px;color:#9a9d9e;">Paz</div>
<div class="r" style="left:685.1px;top:354.1px;width:25.799999999999955px;height:11.5px;background:#3584e4;border-radius:2px;"></div>
<div class="t" style="left:465.6px;width:200px;text-align:center;top:344px;font-size:8.6px;line-height:10px;color:#d6d8d8;-webkit-text-stroke:0.2px currentColor;">29</div>
<div class="t" style="left:492px;width:200px;text-align:center;top:344px;font-size:8.6px;line-height:10px;color:#d6d8d8;-webkit-text-stroke:0.2px currentColor;">30</div>
<div class="t" style="left:518.2px;width:200px;text-align:center;top:344px;font-size:8.6px;line-height:10px;color:#d6d8d8;-webkit-text-stroke:0.2px currentColor;">31</div>
<div class="t" style="left:544.5px;width:200px;text-align:center;top:344px;font-size:8.6px;line-height:10px;color:#1e1e1e;-webkit-text-stroke:0.2px currentColor;">1</div>
<div class="t" style="left:570.9px;width:200px;text-align:center;top:344px;font-size:8.6px;line-height:10px;color:#1e1e1e;-webkit-text-stroke:0.2px currentColor;">2</div>
<div class="t" style="left:597.4px;width:200px;text-align:center;top:344px;font-size:8.6px;line-height:10px;color:#1e1e1e;-webkit-text-stroke:0.2px currentColor;">3</div>
<div class="t" style="left:623.8px;width:200px;text-align:center;top:344px;font-size:8.6px;line-height:10px;color:#1e1e1e;-webkit-text-stroke:0.2px currentColor;">4</div>
<div class="t" style="left:465.6px;width:200px;text-align:center;top:355px;font-size:8.6px;line-height:10px;color:#1e1e1e;-webkit-text-stroke:0.2px currentColor;">5</div>
<div class="t" style="left:492px;width:200px;text-align:center;top:355px;font-size:8.6px;line-height:10px;color:#1e1e1e;-webkit-text-stroke:0.2px currentColor;">6</div>
<div class="t" style="left:518.2px;width:200px;text-align:center;top:355px;font-size:8.6px;line-height:10px;color:#1e1e1e;-webkit-text-stroke:0.2px currentColor;">7</div>
<div class="t" style="left:544.5px;width:200px;text-align:center;top:355px;font-size:8.6px;line-height:10px;color:#1e1e1e;-webkit-text-stroke:0.2px currentColor;">8</div>
<div class="t" style="left:570.9px;width:200px;text-align:center;top:355px;font-size:8.6px;line-height:10px;color:#1e1e1e;-webkit-text-stroke:0.2px currentColor;">9</div>
<div class="t" style="left:597.4px;width:200px;text-align:center;top:355px;font-size:8.6px;line-height:10px;color:#ffffff;-webkit-text-stroke:0.2px currentColor;">10</div>
<div class="t" style="left:623.8px;width:200px;text-align:center;top:355px;font-size:8.6px;line-height:10px;color:#1e1e1e;-webkit-text-stroke:0.2px currentColor;">11</div>
<div class="t" style="left:465.6px;width:200px;text-align:center;top:367px;font-size:8.6px;line-height:10px;color:#1e1e1e;-webkit-text-stroke:0.2px currentColor;">12</div>
<div class="t" style="left:492px;width:200px;text-align:center;top:367px;font-size:8.6px;line-height:10px;color:#1e1e1e;-webkit-text-stroke:0.2px currentColor;">13</div>
<div class="t" style="left:518.2px;width:200px;text-align:center;top:367px;font-size:8.6px;line-height:10px;color:#1e1e1e;-webkit-text-stroke:0.2px currentColor;">14</div>
<div class="t" style="left:544.5px;width:200px;text-align:center;top:367px;font-size:8.6px;line-height:10px;color:#1e1e1e;-webkit-text-stroke:0.2px currentColor;">15</div>
<div class="t" style="left:570.9px;width:200px;text-align:center;top:367px;font-size:8.6px;line-height:10px;color:#1e1e1e;-webkit-text-stroke:0.2px currentColor;">16</div>
<div class="t" style="left:597.4px;width:200px;text-align:center;top:367px;font-size:8.6px;line-height:10px;color:#1e1e1e;-webkit-text-stroke:0.2px currentColor;">17</div>
<div class="t" style="left:623.8px;width:200px;text-align:center;top:367px;font-size:8.6px;line-height:10px;color:#1e1e1e;-webkit-text-stroke:0.2px currentColor;">18</div>
<div class="t" style="left:465.6px;width:200px;text-align:center;top:378px;font-size:8.6px;line-height:10px;color:#1e1e1e;-webkit-text-stroke:0.2px currentColor;">19</div>
<div class="t" style="left:492px;width:200px;text-align:center;top:378px;font-size:8.6px;line-height:10px;color:#1e1e1e;-webkit-text-stroke:0.2px currentColor;">20</div>
<div class="t" style="left:518.2px;width:200px;text-align:center;top:378px;font-size:8.6px;line-height:10px;color:#1e1e1e;-webkit-text-stroke:0.2px currentColor;">21</div>
<div class="t" style="left:544.5px;width:200px;text-align:center;top:378px;font-size:8.6px;line-height:10px;color:#1e1e1e;-webkit-text-stroke:0.2px currentColor;">22</div>
<div class="t" style="left:570.9px;width:200px;text-align:center;top:378px;font-size:8.6px;line-height:10px;color:#1e1e1e;-webkit-text-stroke:0.2px currentColor;">23</div>
<div class="t" style="left:597.4px;width:200px;text-align:center;top:378px;font-size:8.6px;line-height:10px;color:#1e1e1e;-webkit-text-stroke:0.2px currentColor;">24</div>
<div class="t" style="left:623.8px;width:200px;text-align:center;top:378px;font-size:8.6px;line-height:10px;color:#1e1e1e;-webkit-text-stroke:0.2px currentColor;">25</div>
<div class="t" style="left:465.6px;width:200px;text-align:center;top:390px;font-size:8.6px;line-height:10px;color:#1e1e1e;-webkit-text-stroke:0.2px currentColor;">26</div>
<div class="t" style="left:492px;width:200px;text-align:center;top:390px;font-size:8.6px;line-height:10px;color:#1e1e1e;-webkit-text-stroke:0.2px currentColor;">27</div>
<div class="t" style="left:518.2px;width:200px;text-align:center;top:390px;font-size:8.6px;line-height:10px;color:#1e1e1e;-webkit-text-stroke:0.2px currentColor;">28</div>
<div class="t" style="left:544.5px;width:200px;text-align:center;top:390px;font-size:8.6px;line-height:10px;color:#1e1e1e;-webkit-text-stroke:0.2px currentColor;">29</div>
<div class="t" style="left:570.9px;width:200px;text-align:center;top:390px;font-size:8.6px;line-height:10px;color:#1e1e1e;-webkit-text-stroke:0.2px currentColor;">30</div>
<div class="t" style="left:597.4px;width:200px;text-align:center;top:390px;font-size:8.6px;line-height:10px;color:#1e1e1e;-webkit-text-stroke:0.2px currentColor;">31</div>
<div class="t" style="left:623.8px;width:200px;text-align:center;top:390px;font-size:8.6px;line-height:10px;color:#d6d8d8;-webkit-text-stroke:0.2px currentColor;">1</div>
<div class="t" style="left:465.6px;width:200px;text-align:center;top:402px;font-size:8.6px;line-height:10px;color:#d6d8d8;-webkit-text-stroke:0.2px currentColor;">2</div>
<div class="t" style="left:492px;width:200px;text-align:center;top:402px;font-size:8.6px;line-height:10px;color:#d6d8d8;-webkit-text-stroke:0.2px currentColor;">3</div>
<div class="t" style="left:518.2px;width:200px;text-align:center;top:402px;font-size:8.6px;line-height:10px;color:#d6d8d8;-webkit-text-stroke:0.2px currentColor;">4</div>
<div class="t" style="left:544.5px;width:200px;text-align:center;top:402px;font-size:8.6px;line-height:10px;color:#d6d8d8;-webkit-text-stroke:0.2px currentColor;">5</div>
<div class="t" style="left:570.9px;width:200px;text-align:center;top:402px;font-size:8.6px;line-height:10px;color:#d6d8d8;-webkit-text-stroke:0.2px currentColor;">6</div>
<div class="t" style="left:597.4px;width:200px;text-align:center;top:402px;font-size:8.6px;line-height:10px;color:#d6d8d8;-webkit-text-stroke:0.2px currentColor;">7</div>
<div class="t" style="left:623.8px;width:200px;text-align:center;top:402px;font-size:8.6px;line-height:10px;color:#d6d8d8;-webkit-text-stroke:0.2px currentColor;">8</div>
</body></html>
